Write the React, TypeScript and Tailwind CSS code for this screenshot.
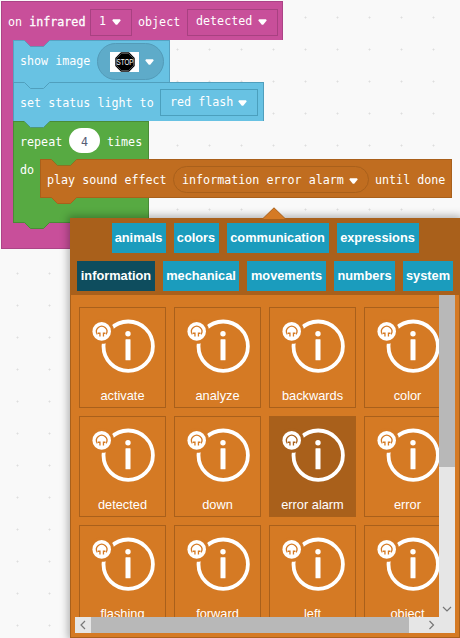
import React from "react";

const mono = "font-['DejaVu_Sans_Mono',monospace] text-[11.7px] leading-none text-white whitespace-pre";

function Caret() {
  return (
    <svg width="9" height="6" viewBox="0 0 9 6" className="shrink-0">
      <path d="M1 .3h7l.7 1.200L5.200 5.700H3.800L.3 1.500z" fill="#fff" />
    </svg>
  );
}

function Notch({ fill, stroke, className = "" }: { fill: string; stroke: string; className?: string }) {
  return (
    <svg width="26" height="8" viewBox="0 0 26 8" className={`absolute ${className}`}>
      <path d="M0 0H26L19.500 6.500H6.500L.5 .5z" fill={fill} />
      <path d="M.5 .5L6.500 6.500H19.500L25.500 .5" fill="none" stroke={stroke} />
    </svg>
  );
}

function StopSign() {
  return (
    <span className="flex h-5 w-[29px] shrink-0 items-center justify-center bg-white">
      <svg width="20" height="20" viewBox="0 0 20 20" className="overflow-visible">
        <path d="M6 .3h8l5.700 5.700v8L14 19.700H6L.3 14V6z" fill="#000" />
        <path d="M6.500 1.500h7l5 5v7l-5 5h-7l-5-5v-7z" fill="none" stroke="#999" strokeWidth=".5" />
        <text x="10" y="13.200" textAnchor="middle" textLength="17" lengthAdjust="spacingAndGlyphs" fontFamily="Liberation Sans, sans-serif" fontSize="9" fill="#fff">STOP</text>
      </svg>
    </span>
  );
}

function InfoIcon({ backing }: { backing: string }) {
  return (
    <svg width="64" height="60" viewBox="0 0 64 60" className="shrink-0">
      <circle cx="37.200" cy="30.200" r="24.700" fill="none" stroke="#fff" strokeWidth="3.800" />
      <circle cx="10.700" cy="15.400" r="12.400" fill={backing} />
      <circle cx="10.700" cy="15.400" r="9.300" fill="#fff" />
      <path d="M6.300 18.300A5.200 5.200 0 1 1 15.100 18.300" fill="none" stroke={backing} strokeWidth="1.300" />
      <path d="M7 16.600h2.600v3.900H8.300V18H7zM14.400 16.600h-2.600v3.900h1.300V18h1.300z" fill={backing} />
      <circle cx="37" cy="17.800" r="2.700" fill="#fff" />
      <rect x="34.500" y="23.200" width="5" height="21" rx=".5" fill="#fff" />
    </svg>
  );
}

const tabRows = [
  [
    { name: "animals", width: "w-[54px]" },
    { name: "colors", width: "w-[45px]" },
    { name: "communication", width: "w-[102px]" },
    { name: "expressions", width: "w-[82px]" },
  ],
  [
    { name: "information", width: "w-[78px]" },
    { name: "mechanical", width: "w-[76px]" },
    { name: "movements", width: "w-[79px]" },
    { name: "numbers", width: "w-[61px]" },
    { name: "system", width: "w-[50px]" },
  ],
];

const sounds = [
  "activate", "analyze", "backwards", "color",
  "detected", "down", "error alarm", "error",
  "flashing", "forward", "left", "object",
];

function SoundPicker() {
  return (
    <div className="absolute left-[70px] top-[218px] h-[420px] w-[390px] border border-[#a9601b] bg-[#d57a24] font-['Liberation_Sans',sans-serif] shadow-[0_0_8px_2px_rgba(0,0,0,0.3)]">
      <svg width="24" height="12" viewBox="0 0 24 12" className="absolute left-[191px] -top-3">
        <path d="M.5 12L12 .8L23.500 12" fill="#d57a24" stroke="#a9601b" />
      </svg>
      <div className="flex h-[76px] flex-col gap-2 bg-[#a9601b] pt-1">
        {tabRows.map((row, i) => (
          <div key={i} className="flex justify-center gap-2">
            {row.map((tab) => (
              <button
                key={tab.name}
                className={`h-[30px] shrink-0 text-center text-[12.8px] font-bold leading-[30px] text-white ${tab.width} ${tab.name === "information" ? "bg-[#0e4d5e]" : "bg-[#1b9cbd]"}`}
              >
                {tab.name}
              </button>
            ))}
          </div>
        ))}
      </div>
      <div className="ml-1 flex h-[338px] w-[380px]">
        <div className="flex w-[364px] flex-col">
          <div className="h-[322px] overflow-hidden">
            <div className="grid w-[380px] grid-cols-[repeat(4,87px)] gap-2 pl-1 pt-3">
              {sounds.map((sound) => {
                const selected = sound === "error alarm";
                return (
                  <div
                    key={sound}
                    className={`flex h-[101px] flex-col items-center border border-[#a9601b] pt-2 text-[12.8px] leading-4 text-white ${selected ? "bg-[#a9601b]" : ""}`}
                  >
                    <InfoIcon backing={selected ? "#a9601b" : "#d57a24"} />
                    <span className="mt-3">{sound}</span>
                  </div>
                );
              })}
            </div>
          </div>
          <div className="flex h-4 bg-[#e6e6e6]">
            <svg width="16" height="16" viewBox="0 0 16 16">
              <path d="M10 4L6 8l4 4" fill="none" stroke="#777" strokeWidth="1.200" />
            </svg>
            <div className="w-[318px] bg-[#b8b8b8]" />
            <svg width="30" height="16" viewBox="0 0 30 16">
              <path d="M20.500 4l4 4l-4 4" fill="none" stroke="#777" strokeWidth="1.200" />
            </svg>
          </div>
        </div>
        <div className="flex w-4 flex-col justify-between bg-[#e6e6e6] pb-4">
          <div className="h-[172px] bg-[#b8b8b8]" />
          <svg width="16" height="16" viewBox="0 0 16 16">
            <path d="M4 6l4 4l4-4" fill="none" stroke="#777" strokeWidth="1.200" />
          </svg>
        </div>
      </div>
    </div>
  );
}

export default function App() {
  return (
    <div className="relative h-[638px] w-[460px] overflow-hidden bg-[#f9f9f9]">
      <div className="absolute inset-0 bg-[radial-gradient(circle_at_17.5px_17.5px,#dedede_0.8px,transparent_1.2px)] bg-[size:32px_32px]" />
      <div className={`absolute left-px top-px flex w-[282px] flex-col ${mono}`}>
        <div className="flex h-[39px] items-center border border-b-0 border-[#ac4487] bg-[#c84f9a] pl-[6px] pt-[2px]">
          <span className="w-[82px] pt-px">on <span className="[-webkit-text-stroke:0.3px_white]">infrared</span></span>
          <span className="flex h-[27px] w-[42px] items-center justify-between border border-[#a84181] pl-2 pr-2.5">1<Caret /></span>
          <span className="w-[55px] pl-[6px] pt-px">object</span>
          <span className="flex h-[27px] w-[91px] items-center justify-between border border-[#a84181] pl-2 pr-2.5">detected<Caret /></span>
        </div>
        <div className="border-l border-[#ac4487]">
          <div className="flex flex-col items-start border-l-[11px] border-[#c84f9a]">
            <div className="relative flex h-[42px] w-[157px] items-center border-r border-t border-l border-[#57a3c3] bg-[#68c2e3] pl-[6px]">
              <Notch fill="#c84f9a" stroke="#6592b5" className="left-[10px] -top-px" />
              <span className="w-[77px] pt-px">show image</span>
              <span className="flex h-[37px] w-[67px] items-center justify-between rounded-full border border-[#539bb8] bg-[#5eabc9] pl-3 pr-[9px]"><StopSign /><Caret /></span>
            </div>
            <div className="relative flex h-[39px] w-[251px] items-center border border-b-0 border-[#509fbd] bg-[#68c2e3] pl-[6px]">
              <Notch fill="#68c2e3" stroke="#509fbd" className="left-[10px] -top-px" />
              <span className="w-[140px] pt-[3px]">set status light to</span>
              <span className="flex h-[27px] w-[98px] items-center justify-between border border-[#4b9fbd] pl-[9px] pr-2.5 pt-[2px]">red flash<Caret /></span>
            </div>
            <div className="relative h-[102px] w-[136px] border border-[#4a8b37] bg-[#57aa42]">
              <Notch fill="#68c2e3" stroke="#4e9878" className="left-[10px] -top-px" />
              <div className="flex h-[37px] items-center pl-[6px] pt-[4px]">
                <span className="w-[49px] pt-px">repeat</span>
                <span className="-mt-1 mr-[7px] flex h-[25px] w-[31px] items-center justify-center rounded-full bg-white pt-1 text-[#575e75]">4</span>
                <span className="pt-px">times</span>
              </div>
              <div className="flex">
                <span className="w-[26px] shrink-0 pl-[6px] pt-[6px]">do</span>
                <div className="relative flex h-[39px] w-[412px] shrink-0 items-center border border-[#a9601b] bg-[#c06d20] pl-[6px] pt-1">
                  <Notch fill="#57aa42" stroke="#8a7322" className="left-[10px] -top-px" />
                  <Notch fill="#c06d20" stroke="#a9601b" className="left-[10px] top-[37px]" />
                  <span className="w-[126px]">play sound effect</span>
                  <span className="-mt-[3px] mr-[6px] flex h-[27px] w-[196px] items-center justify-between rounded-full border border-[#a9601b] pl-2 pr-2.5 pt-[3px]">information error alarm<Caret /></span>
                  <span>until done</span>
                </div>
              </div>
              <Notch fill="#57aa42" stroke="#4a8b37" className="left-[10px] top-[100px]" />
            </div>
          </div>
          <div className="h-[26px] border-b border-[#ac4487] bg-[#c84f9a]" />
        </div>
      </div>
      <SoundPicker />
    </div>
  );
}
